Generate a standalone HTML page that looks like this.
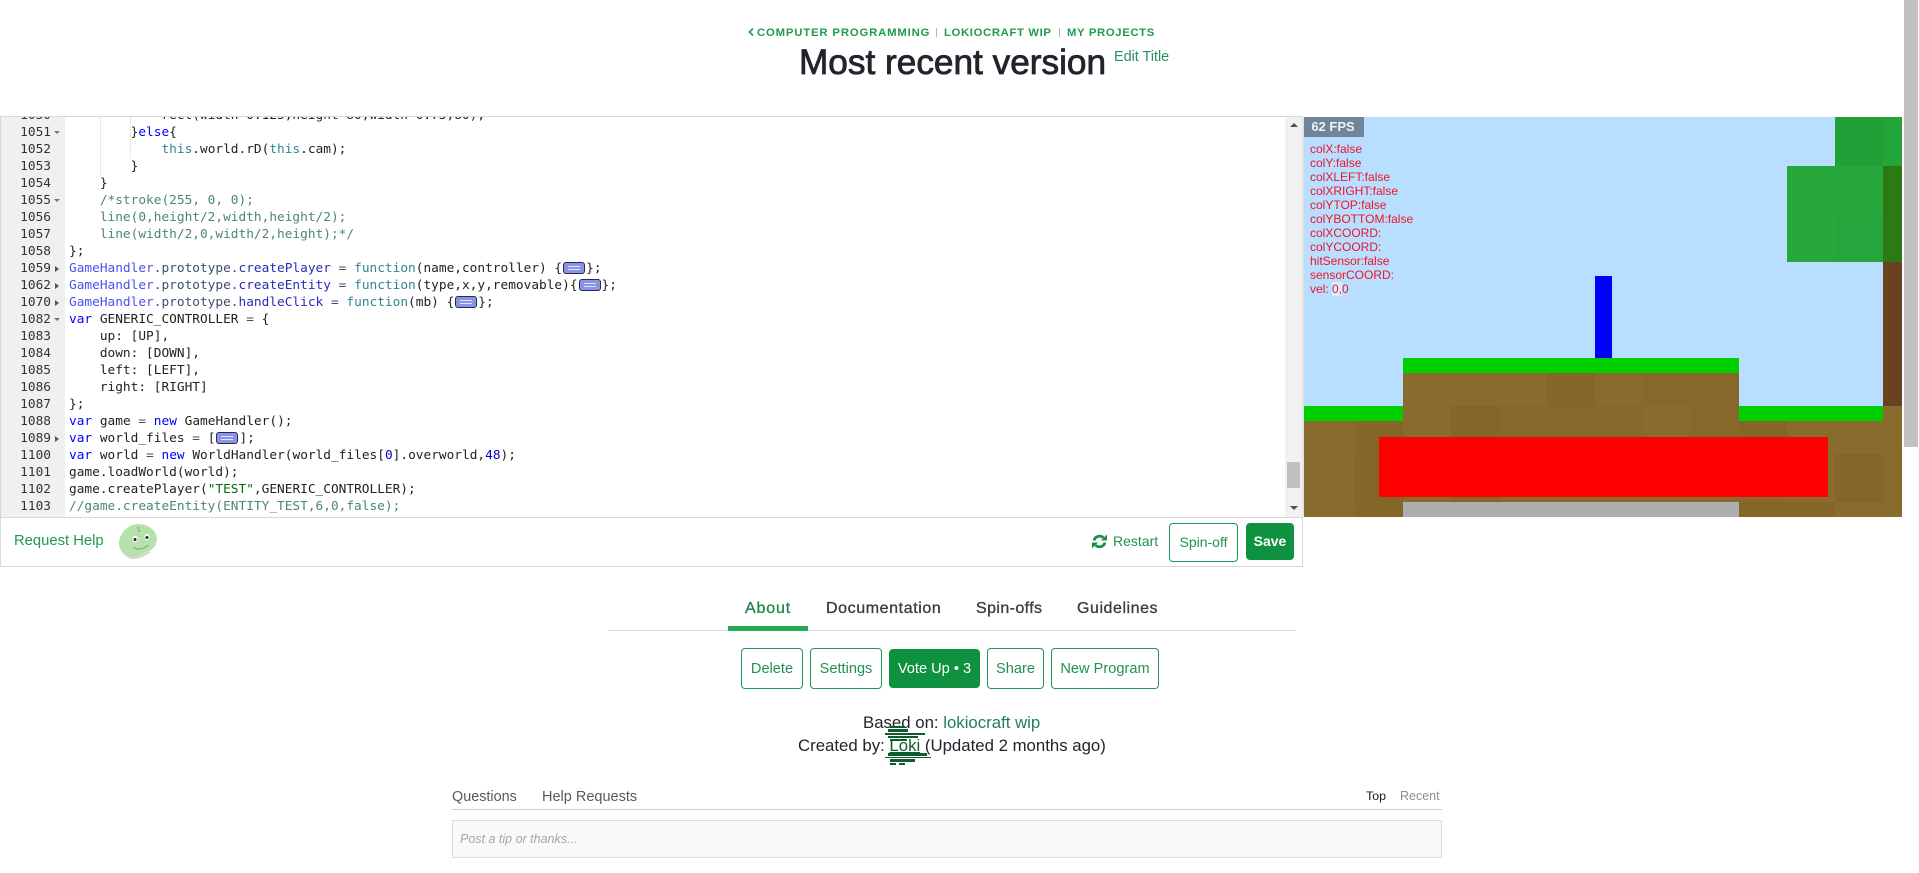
<!DOCTYPE html>
<html><head><meta charset="utf-8"><title>Most recent version</title>
<style>
html,body{margin:0;padding:0;background:#fff;width:1919px;height:873px;overflow:hidden}
body{position:relative;font-family:"Liberation Sans",sans-serif;color:#21242c}
.a{position:absolute;white-space:nowrap}
.r{position:absolute}
#ed{position:absolute;left:1px;top:117px;width:1284px;height:400px;overflow:hidden;background:#fff}
#gut{position:absolute;left:0;top:0;width:64px;height:400px;background:#f0f0f0}
.n{position:absolute;left:0;width:50px;text-align:right;font:12.8px/17px "DejaVu Sans Mono",monospace;color:#333}
.l{position:absolute;left:68px;font:12.8px/17px "DejaVu Sans Mono",monospace;color:#222;white-space:pre;height:17px}
.f{position:absolute;left:54px;width:0;height:0}
.fo{border-left:4px solid #555;border-top:3px solid transparent;border-bottom:3px solid transparent;margin-top:6px}
.fd{border-top:3px solid #777;border-left:3px solid transparent;border-right:3px solid transparent;margin-top:7px;margin-left:-1px}
.g{position:absolute;width:0;border-left:1px dotted #d2d2d2}
.k{color:#00f}.t{color:#318495}.c{color:#4c886b}.s{color:#036a07}.d{color:#0000cd}
.m{color:#4a50f0}.p{color:#3c4c72}.e{color:#2a2ab8}
.w{display:inline-block;width:22px;height:12px;background:#8a94e0;border:1px solid #222a58;border-radius:3px;box-sizing:border-box;margin:0 1px;vertical-align:-2px;position:relative}
.w:after{content:"";position:absolute;left:4px;right:4px;top:3px;height:2px;border-top:1px solid #dfe4ff;border-bottom:1px solid #dfe4ff}
.btn{position:absolute;box-sizing:border-box;border:1px solid #1c9a52;border-radius:4px;background:#fff;color:#1f9253;text-align:center;font-size:14.6px;white-space:nowrap}
.dbg{position:absolute;left:1310px;color:#f01428;font:12px/14px "Liberation Sans",sans-serif;white-space:nowrap}
.bc{position:absolute;top:26px;white-space:nowrap;font-size:11.3px;line-height:14px;font-weight:bold;letter-spacing:.75px;color:#1f9a51}
.bs{position:absolute;top:28px;width:1px;height:9px;background:#b5b5b5}
.tab{position:absolute;top:599px;white-space:nowrap;font-size:16px;line-height:19px;letter-spacing:.6px;color:#3b3e40;-webkit-text-stroke:.35px #3b3e40}
</style></head><body>

<!-- page scrollbar -->
<div class="r" style="left:1904px;top:0;width:14px;height:447px;background:#c1c1c1"></div>

<!-- header -->
<svg class="r" style="left:748px;top:28px" width="6" height="8" viewBox="0 0 6 8"><path d="M5 .5L1.500 4L5 7.500" fill="none" stroke="#1f9a51" stroke-width="1.600"/></svg>
<div class="bc" style="left:757px;letter-spacing:.85px">COMPUTER PROGRAMMING</div>
<div class="bs" style="left:936px"></div>
<div class="bc" style="left:944px;letter-spacing:.65px">LOKIOCRAFT WIP</div>
<div class="bs" style="left:1059px"></div>
<div class="bc" style="left:1067px;letter-spacing:.65px">MY PROJECTS</div>
<div class="a" style="left:799px;top:42px;font-size:35.2px;line-height:42px;color:#21242c;-webkit-text-stroke:.8px #21242c">Most recent version</div>
<div class="a" style="left:1114px;top:48px;font-size:14.4px;line-height:18px;color:#2b8f62">Edit Title</div>

<!-- editor frame -->
<div class="r" style="left:0;top:116px;width:1303px;height:1px;background:#d8d8d8"></div>
<div class="r" style="left:0;top:116px;width:1px;height:451px;background:#d8d8d8"></div>
<div class="r" style="left:1302px;top:117px;width:2px;height:400px;background:#e4e4e4"></div>

<div id="ed">
<div id="gut"></div>
<div class="g" style="left:99px;top:0;height:58px"></div>
<div class="g" style="left:129px;top:0;height:41px"></div>
<div class="n" style="top:-10px">1050</div><div class="l" style="top:-10px">            rect(width-0.125,height-80,width-0.75,80);</div>
<div class="n" style="top:7px">1051</div><div class="f fd" style="top:7px"></div><div class="l" style="top:7px">        }<span class="k">else</span>{</div>
<div class="n" style="top:24px">1052</div><div class="l" style="top:24px">            <span class="t">this</span>.world.rD(<span class="t">this</span>.cam);</div>
<div class="n" style="top:41px">1053</div><div class="l" style="top:41px">        }</div>
<div class="n" style="top:58px">1054</div><div class="l" style="top:58px">    }</div>
<div class="n" style="top:75px">1055</div><div class="f fd" style="top:75px"></div><div class="l c" style="top:75px">    /*stroke(255, 0, 0);</div>
<div class="n" style="top:92px">1056</div><div class="l c" style="top:92px">    line(0,height/2,width,height/2);</div>
<div class="n" style="top:109px">1057</div><div class="l c" style="top:109px">    line(width/2,0,width/2,height);*/</div>
<div class="n" style="top:126px">1058</div><div class="l" style="top:126px">};</div>
<div class="n" style="top:143px">1059</div><div class="f fo" style="top:143px"></div><div class="l" style="top:143px"><span class="m">GameHandler</span><span class="p">.prototype.</span><span class="e">createPlayer</span> <span class="p">=</span> <span class="t">function</span>(name,controller) {<span class="w"></span>};</div>
<div class="n" style="top:160px">1062</div><div class="f fo" style="top:160px"></div><div class="l" style="top:160px"><span class="m">GameHandler</span><span class="p">.prototype.</span><span class="e">createEntity</span> <span class="p">=</span> <span class="t">function</span>(type,x,y,removable){<span class="w"></span>};</div>
<div class="n" style="top:177px">1070</div><div class="f fo" style="top:177px"></div><div class="l" style="top:177px"><span class="m">GameHandler</span><span class="p">.prototype.</span><span class="e">handleClick</span> <span class="p">=</span> <span class="t">function</span>(mb) {<span class="w"></span>};</div>
<div class="n" style="top:194px">1082</div><div class="f fd" style="top:194px"></div><div class="l" style="top:194px"><span class="k">var</span> GENERIC_CONTROLLER <span class="p">=</span> {</div>
<div class="n" style="top:211px">1083</div><div class="l" style="top:211px">    up: [UP],</div>
<div class="n" style="top:228px">1084</div><div class="l" style="top:228px">    down: [DOWN],</div>
<div class="n" style="top:245px">1085</div><div class="l" style="top:245px">    left: [LEFT],</div>
<div class="n" style="top:262px">1086</div><div class="l" style="top:262px">    right: [RIGHT]</div>
<div class="n" style="top:279px">1087</div><div class="l" style="top:279px">};</div>
<div class="n" style="top:296px">1088</div><div class="l" style="top:296px"><span class="k">var</span> game <span class="p">=</span> <span class="k">new</span> GameHandler();</div>
<div class="n" style="top:313px">1089</div><div class="f fo" style="top:313px"></div><div class="l" style="top:313px"><span class="k">var</span> world_files <span class="p">=</span> [<span class="w"></span>];</div>
<div class="n" style="top:330px">1100</div><div class="l" style="top:330px"><span class="k">var</span> world <span class="p">=</span> <span class="k">new</span> WorldHandler(world_files[<span class="d">0</span>].overworld,<span class="d">48</span>);</div>
<div class="n" style="top:347px">1101</div><div class="l" style="top:347px">game.loadWorld(world);</div>
<div class="n" style="top:364px">1102</div><div class="l" style="top:364px">game.createPlayer(<span class="s">"TEST"</span>,GENERIC_CONTROLLER);</div>
<div class="n" style="top:381px">1103</div><div class="l c" style="top:381px">//game.createEntity(ENTITY_TEST,6,0,false);</div>
</div>

<!-- editor scrollbar -->
<div class="r" style="left:1285px;top:117px;width:17px;height:400px;background:#f1f1f1"></div>
<div class="r" style="left:1287px;top:462px;width:13px;height:26px;background:#c1c1c1"></div>
<div class="r" style="left:1290px;top:123px;width:0;height:0;border-left:4px solid transparent;border-right:4px solid transparent;border-bottom:4px solid #505050"></div>
<div class="r" style="left:1290px;top:506px;width:0;height:0;border-left:4px solid transparent;border-right:4px solid transparent;border-top:4px solid #505050"></div>

<!-- canvas -->
<div class="r" style="left:1304px;top:117px;width:598px;height:400px;background:#b8dfff;overflow:hidden">
 <svg width="598" height="400" viewBox="1304 117 598 400" style="position:absolute;left:0;top:0" shape-rendering="crispEdges">
  <rect x="1835" y="117" width="48" height="49" fill="#21a038"/>
  <rect x="1883" y="117" width="19" height="49" fill="#24a53a"/>
  <rect x="1787" y="166" width="96" height="96" fill="#26a83d"/>
  <rect x="1835" y="214" width="48" height="48" fill="#25a63c"/>
  <rect x="1883" y="166" width="19" height="96" fill="#2b7a14"/>
  <rect x="1883" y="262" width="19" height="144" fill="#6a421f"/>
  <!-- dirt base -->
  <rect x="1304" y="406" width="598" height="111" fill="#886a2d"/>
  <rect x="1403" y="373" width="336" height="33" fill="#886a2d"/>
  <!-- row 1 -->
  <rect x="1403" y="373" width="144" height="33" fill="#8a6b2e"/>
  <rect x="1547" y="373" width="48" height="33" fill="#856629"/>
  <rect x="1595" y="373" width="48" height="33" fill="#8a6b2e"/>
  <rect x="1643" y="373" width="96" height="33" fill="#87682b"/>
  <!-- row 2 -->
  <rect x="1403" y="406" width="48" height="48" fill="#8a6b2e"/>
  <rect x="1451" y="406" width="48" height="48" fill="#856629"/>
  <rect x="1499" y="406" width="144" height="48" fill="#87682b"/>
  <rect x="1643" y="406" width="48" height="48" fill="#8a6b2e"/>
  <rect x="1691" y="406" width="48" height="48" fill="#87682b"/>
  <rect x="1739" y="406" width="48" height="48" fill="#856629"/>
  <rect x="1787" y="406" width="115" height="48" fill="#8a6b2e"/>
  <rect x="1355" y="406" width="48" height="48" fill="#856629"/>
  <!-- row 3 -->
  <rect x="1304" y="454" width="51" height="48" fill="#8a6b2e"/>
  <rect x="1355" y="454" width="48" height="48" fill="#856629"/>
  <rect x="1451" y="454" width="48" height="48" fill="#856629"/>
  <rect x="1787" y="454" width="48" height="48" fill="#8a6b2e"/>
  <rect x="1835" y="454" width="48" height="48" fill="#856629"/>
  <!-- row 4 -->
  <rect x="1355" y="502" width="48" height="15" fill="#856629"/>
  <rect x="1739" y="502" width="96" height="15" fill="#856629"/>
  <rect x="1835" y="502" width="48" height="15" fill="#8a6b2e"/>
  <rect x="1403" y="358" width="336" height="15" fill="#00d000"/>
  <rect x="1304" y="406" width="99" height="15" fill="#00d000"/>
  <rect x="1739" y="406" width="144" height="15" fill="#00d000"/>
  <rect x="1595" y="276" width="17" height="82" fill="#00f"/>
  <rect x="1379" y="437" width="449" height="60" fill="#f00"/>
  <rect x="1403" y="502" width="336" height="15" fill="#aeaeae"/>
 </svg>
</div>
<div class="a" style="left:1304px;top:117px;width:60px;height:20px;background:#70859a;color:#eef2f5;font-size:13px;font-weight:bold;line-height:20px;text-align:center;text-indent:-2px">62 FPS</div>
<div class="dbg" style="top:142px">colX:false</div>
<div class="dbg" style="top:156px">colY:false</div>
<div class="dbg" style="top:170px">colXLEFT:false</div>
<div class="dbg" style="top:184px">colXRIGHT:false</div>
<div class="dbg" style="top:198px">colYTOP:false</div>
<div class="dbg" style="top:212px">colYBOTTOM:false</div>
<div class="dbg" style="top:226px">colXCOORD:</div>
<div class="dbg" style="top:240px">colYCOORD:</div>
<div class="dbg" style="top:254px">hitSensor:false</div>
<div class="dbg" style="top:268px">sensorCOORD:</div>
<div class="dbg" style="top:282px">vel: <span style="background:rgba(255,255,255,.45)">0,</span>0</div>

<!-- toolbar -->
<div class="r" style="left:0;top:517px;width:1303px;height:1px;background:#d8d8d8"></div>
<div class="r" style="left:0;top:566px;width:1303px;height:1px;background:#d8d8d8"></div>
<div class="r" style="left:1302px;top:517px;width:1px;height:50px;background:#d8d8d8"></div>
<div class="a" style="left:14px;top:532px;font-size:14.8px;line-height:18px;color:#1f9a51">Request Help</div>
<svg class="r" style="left:117px;top:522px" width="42" height="39" viewBox="0 0 42 39">
 <path d="M3 22C4 28 9 36 17 36C23 36 28 32 33 30" fill="none" stroke="#d2d2d2" stroke-width="2"/>
 <path d="M2 20C3 11 11 2 21 2C31 2 39 8 40 16C40 22 37 27 32 29C27 31 22 35 16 35C8 35 1 28 2 20Z" fill="#b5e2ab"/>
 <ellipse cx="18" cy="17" rx="2.600" ry="3.400" fill="#fff"/><circle cx="18" cy="17.500" r="1.500" fill="#222"/>
 <ellipse cx="30" cy="15" rx="2.400" ry="3.200" fill="#fff"/><circle cx="30" cy="15.500" r="1.500" fill="#222"/>
 <path d="M17 25C19 28 26 28 31 23" fill="none" stroke="#7fb276" stroke-width="1.200"/>
 <circle cx="21" cy="6" r="1" fill="#7fa878"/><circle cx="22" cy="9" r="1" fill="#7fa878"/>
</svg>
<svg class="r" style="left:1092px;top:534px" width="15" height="15" viewBox="0 0 15 15">
 <path d="M2 6.500A5.700 5.700 0 0 1 11.500 3.800" fill="none" stroke="#149442" stroke-width="2.700"/>
 <path d="M15 .5V6.500H9Z" fill="#149442"/>
 <path d="M13 8.500A5.700 5.700 0 0 1 3.500 11.200" fill="none" stroke="#149442" stroke-width="2.700"/>
 <path d="M0 14.500V8.500H6Z" fill="#149442"/>
</svg>
<div class="a" style="left:1113px;top:532px;font-size:14px;line-height:18px;color:#1f9253">Restart</div>
<div class="btn" style="left:1169px;top:523px;width:69px;height:39px;line-height:36px;font-size:14px">Spin-off</div>
<div class="btn" style="left:1246px;top:523px;width:48px;height:37px;line-height:35px;background:#0e923f;border-color:#0e923f;color:#fff;font-weight:bold;font-size:14px">Save</div>

<!-- tabs -->
<div class="tab" style="left:745px;letter-spacing:.85px;color:#1f8a4a;-webkit-text-stroke-color:#1f8a4a">About</div>
<div class="tab" style="left:826px">Documentation</div>
<div class="tab" style="left:976px;letter-spacing:.4px">Spin-offs</div>
<div class="tab" style="left:1077px;letter-spacing:.55px">Guidelines</div>
<div class="r" style="left:608px;top:630px;width:688px;height:1px;background:#d6d8da"></div>
<div class="r" style="left:728px;top:626px;width:80px;height:5px;background:#1fab54"></div>

<!-- buttons -->
<div class="btn" style="left:741px;top:648px;width:62px;height:41px;line-height:41px">Delete</div>
<div class="btn" style="left:810px;top:648px;width:72px;height:41px;line-height:41px">Settings</div>
<div class="btn" style="left:889px;top:649px;width:91px;height:39px;line-height:39px;background:#0e923f;border-color:#0e923f;color:#fff">Vote Up • 3</div>
<div class="btn" style="left:987px;top:648px;width:57px;height:41px;line-height:41px">Share</div>
<div class="btn" style="left:1051px;top:648px;width:108px;height:41px;line-height:41px">New Program</div>

<!-- meta -->
<div class="a" style="left:863px;top:713px;font-size:16.800px;line-height:20px">Based on: <span style="color:#217f55">lokiocraft wip</span></div>
<div class="a" style="left:798px;top:736px;font-size:16.800px;line-height:20px">Created by: <span style="color:#0d5c2c;text-decoration:underline">Loki</span> (Updated 2 months ago)</div>
<svg class="r" style="left:880px;top:722px" width="54" height="46" viewBox="880 722 54 46" shape-rendering="crispEdges">
 <g fill="#0d5c2c">
 <rect x="890" y="726" width="15" height="2"/>
 <rect x="888" y="729" width="20" height="3"/>
 <rect x="885" y="733" width="40" height="2"/>
 <rect x="888" y="736" width="30" height="2"/>
 <rect x="890" y="739" width="17" height="2"/>
 <rect x="888" y="753" width="39" height="3"/>
 <rect x="885" y="757" width="46" height="1"/>
 <rect x="890" y="759" width="25" height="3"/>
 <rect x="890" y="763" width="6" height="2"/>
 <rect x="899" y="763" width="6" height="2"/>
 </g>
</svg>

<!-- questions -->
<div class="a" style="left:452px;top:788px;font-size:14.400px;line-height:18px;color:#555b60">Questions</div>
<div class="a" style="left:542px;top:788px;font-size:14.500px;line-height:18px;color:#555b60">Help Requests</div>
<div class="a" style="left:1366px;top:787px;font-size:12.400px;line-height:18px;color:#1a1a2a">Top</div>
<div class="a" style="left:1400px;top:787px;font-size:12.500px;line-height:18px;color:#8a8f96">Recent</div>
<div class="r" style="left:452px;top:809px;width:990px;height:1px;background:#ccc"></div>
<div class="r" style="left:452px;top:820px;width:990px;height:38px;box-sizing:border-box;background:#f9f9f9;border:1px solid #ddd"></div>
<div class="a" style="left:460px;top:830px;font-size:12.500px;line-height:18px;font-style:italic;color:#a3a6a8">Post a tip or thanks...</div>

</body></html>
